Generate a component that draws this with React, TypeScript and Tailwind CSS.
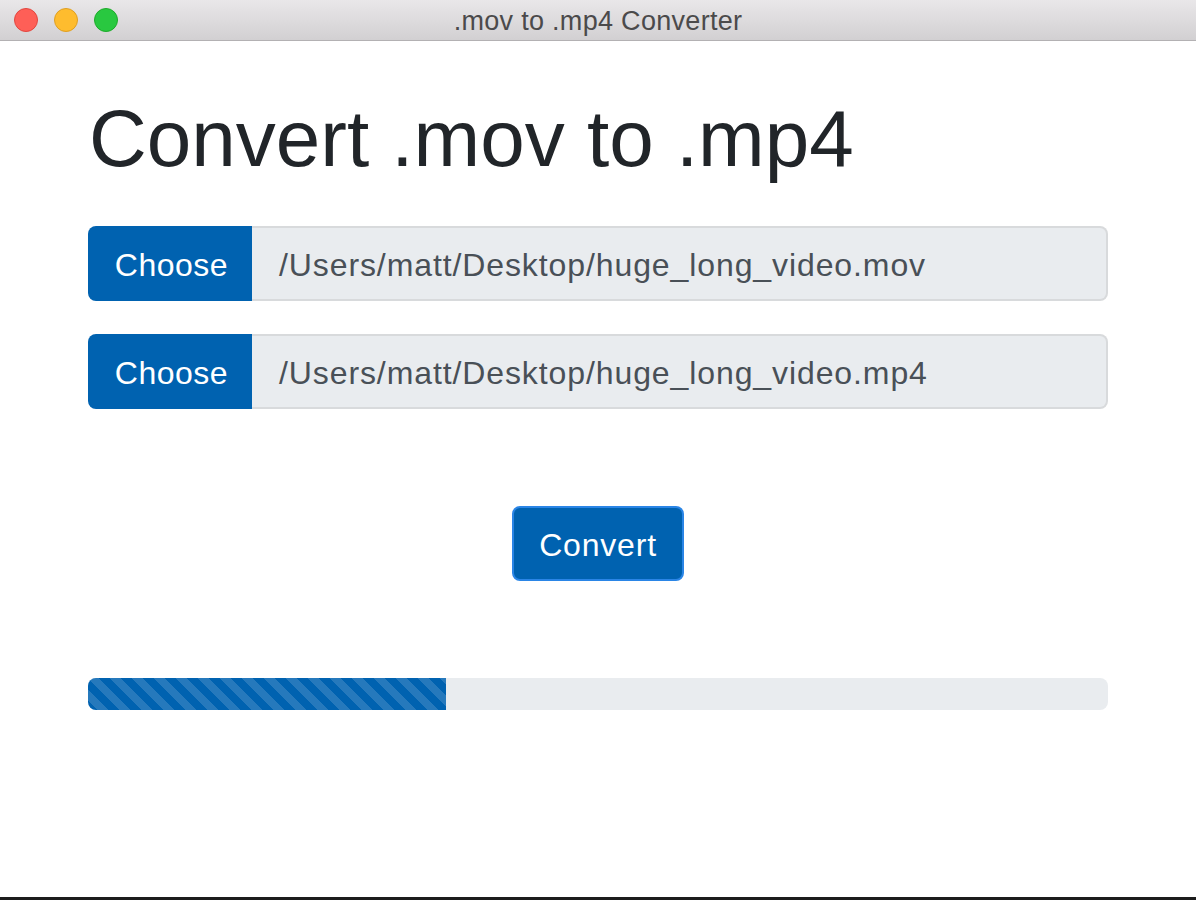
import React from "react";

export default function App() {
  return (
    <div
      className="w-[1196px] h-[900px] flex flex-col bg-white overflow-hidden"
      style={{ fontFamily: '"Liberation Sans", Arial, sans-serif' }}
    >
      {/* Title bar */}
      <div className="relative h-[41px] shrink-0 flex items-center bg-gradient-to-b from-[#e9e7e9] to-[#d2d0d2] border-b border-[#b3b1b3]">
        <div className="flex items-center gap-[16px] pl-[14px]">
          <span className="w-[24px] h-[24px] rounded-full bg-[#fe5f57] border border-[#e2463f]" />
          <span className="w-[24px] h-[24px] rounded-full bg-[#febc2e] border border-[#df9f22]" />
          <span className="w-[24px] h-[24px] rounded-full bg-[#29c840] border border-[#1dab2a]" />
        </div>
        <div className="absolute inset-0 flex items-center justify-center text-[27px] text-[#4b4a4b] leading-none pt-[3px] tracking-[0.3px]">
          .mov to .mp4 Converter
        </div>
      </div>

      {/* Content */}
      <div className="flex-1 flex flex-col px-[88px]">
        <h1 className="mt-[50px] ml-[1px] text-[80px] leading-[96px] text-[#212529] tracking-[0px]">
          Convert .mov to .mp4
        </h1>

        <div className="mt-[39px] flex h-[75px] w-[1020px]">
          <div className="w-[164px] h-full flex items-center justify-center bg-[#0062b0] rounded-l-[8px] text-white text-[32px] tracking-[0.5px] pt-[2px] pl-[3px]">
            Choose
          </div>
          <div className="flex-1 h-full flex items-center pl-[27px] bg-[#e9ecef] border-2 border-l-0 border-[#d8dadc] rounded-r-[8px] text-[#495057] text-[32px] tracking-[0.9px] pt-[2px]">
            /Users/matt/Desktop/huge_long_video.mov
          </div>
        </div>

        <div className="mt-[33px] flex h-[75px] w-[1020px]">
          <div className="w-[164px] h-full flex items-center justify-center bg-[#0062b0] rounded-l-[8px] text-white text-[32px] tracking-[0.5px] pt-[2px] pl-[3px]">
            Choose
          </div>
          <div className="flex-1 h-full flex items-center pl-[27px] bg-[#e9ecef] border-2 border-l-0 border-[#d8dadc] rounded-r-[8px] text-[#495057] text-[32px] tracking-[0.9px] pt-[2px]">
            /Users/matt/Desktop/huge_long_video.mp4
          </div>
        </div>

        <div className="mt-[97px] flex justify-center w-[1020px]">
          <button className="w-[172px] h-[75px] flex items-center justify-center bg-[#0062b0] border-2 border-[#2a85e6] rounded-[8px] text-white text-[32px] tracking-[0.8px] pt-[2px]">
            Convert
          </button>
        </div>

        <div className="mt-[97px] w-[1020px] h-[32px] rounded-[8px] bg-[#e9ecef] overflow-hidden flex">
          <div className="w-[358px] h-full bg-[#0062b0] bg-[linear-gradient(45deg,rgba(255,255,255,0.15)_25%,transparent_25%,transparent_50%,rgba(255,255,255,0.15)_50%,rgba(255,255,255,0.15)_75%,transparent_75%,transparent)] bg-[length:22px_22px]" />
        </div>
      </div>

      <div className="h-[3px] shrink-0 bg-[#1c1c1c]" />
    </div>
  );
}
